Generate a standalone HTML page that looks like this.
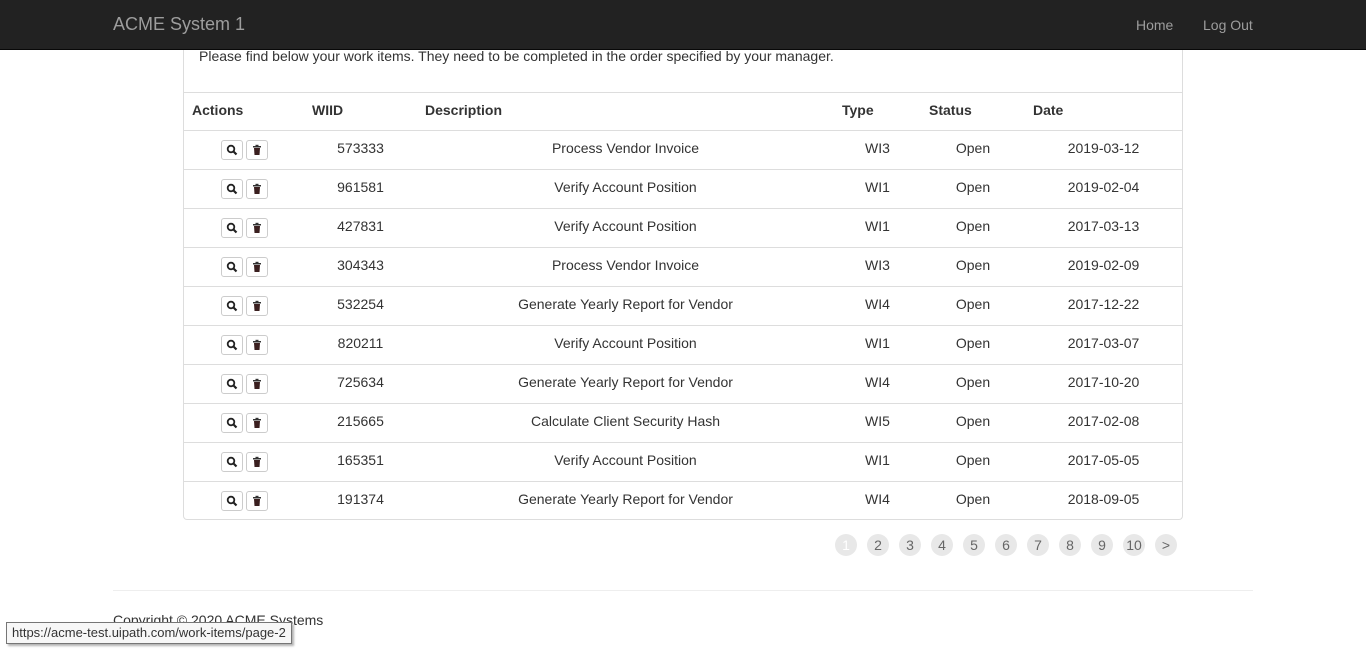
<!DOCTYPE html>
<html><head><meta charset="utf-8"><style>
*{box-sizing:border-box}
body{margin:0;width:1366px;height:650px;overflow:hidden;background:#fff;font-family:"Liberation Sans",Arial,sans-serif;font-size:14px;color:#333;position:relative}
.nav{position:absolute;left:0;top:0;width:1366px;height:50px;background:#222;border-bottom:1px solid #080808;z-index:5}
.brand{position:absolute;left:113px;top:14px;font-size:18px;color:#9d9d9d}
.nl{position:absolute;top:17px;color:#9d9d9d;font-size:14px}
.panel{position:absolute;left:183px;top:30px;width:1000px;height:490px;border:1px solid #ddd;border-top:none;border-radius:0 0 4px 4px}
.intro{position:absolute;left:199px;top:48px;font-size:14px}
table{position:absolute;left:184px;top:92px;border-collapse:collapse;width:998px;table-layout:fixed}
th{text-align:left;font-weight:bold;height:38px;padding:0 8px 4px;border-top:1px solid #ddd;border-bottom:1px solid #ddd}
td{text-align:center;height:39px;padding:0 8px 5px;border-top:1px solid #ddd}
tr:first-child td{border-top:none}
.b{display:inline-block;width:22px;height:20px;border:1px solid #ccc;border-radius:3px;vertical-align:middle;margin:0 1.5px;position:relative;top:2px;background:#fff}
.b svg{position:absolute;left:4px;top:3px}
.pg{position:absolute;top:534px;width:22px;height:22px;border-radius:11px;background:#e8e8e8;color:#666;text-align:center;line-height:22px;font-size:14px}
.hr{position:absolute;left:113px;top:590px;width:1140px;border-top:1px solid #eee}
.copy{position:absolute;left:113px;top:612px}
.tip{position:absolute;left:6px;top:622px;height:22px;padding:0 5px;border:1px solid #767676;background:#f7f7f7;font-size:13px;line-height:20px;color:#333;box-shadow:2px 2px 2px rgba(0,0,0,.3)}
</style></head><body>
<div class="nav"><span class="brand">ACME System 1</span><span class="nl" style="left:1136px">Home</span><span class="nl" style="left:1203px">Log Out</span></div>
<div class="panel"></div>
<div class="intro">Please find below your work items. They need to be completed in the order specified by your manager.</div>
<table>
<colgroup><col style="width:120px"><col style="width:113px"><col style="width:417px"><col style="width:87px"><col style="width:104px"><col style="width:157px"></colgroup>
<thead><tr><th>Actions</th><th>WIID</th><th>Description</th><th>Type</th><th>Status</th><th>Date</th></tr></thead>
<tbody id="tb"></tbody></table>
<script>
var d=[["573333","Process Vendor Invoice","WI3","2019-03-12"],["961581","Verify Account Position","WI1","2019-02-04"],["427831","Verify Account Position","WI1","2017-03-13"],["304343","Process Vendor Invoice","WI3","2019-02-09"],["532254","Generate Yearly Report for Vendor","WI4","2017-12-22"],["820211","Verify Account Position","WI1","2017-03-07"],["725634","Generate Yearly Report for Vendor","WI4","2017-10-20"],["215665","Calculate Client Security Hash","WI5","2017-02-08"],["165351","Verify Account Position","WI1","2017-05-05"],["191374","Generate Yearly Report for Vendor","WI4","2018-09-05"]];
var s='<span class="b"><svg width="12" height="12" viewBox="0 0 12 12"><circle cx="5" cy="5" r="3.3" fill="none" stroke="#222" stroke-width="1.8"/><path d="M7.4 7.4L10.5 10.5" stroke="#222" stroke-width="2.2"/></svg></span><span class="b"><svg width="12" height="12" viewBox="0 0 12 12"><rect x="2" y="2" width="8" height="1.5" fill="#333"/><rect x="4.5" y="0.8" width="3" height="1.5" fill="#333"/><path d="M3 4h6l-.5 7h-5z" fill="#3a1f1f"/></svg></span>';
var h='';d.forEach(function(r){h+='<tr><td>'+s+'</td><td>'+r[0]+'</td><td>'+r[1]+'</td><td>'+r[2]+'</td><td>Open</td><td>'+r[3]+'</td></tr>'});
document.getElementById('tb').innerHTML=h;
var p='',l=['1','2','3','4','5','6','7','8','9','10','>'];
l.forEach(function(t,i){p+='<div class="pg" style="left:'+(835+i*32)+'px;'+(i==0?'color:#fff':'')+'">'+t+'</div>'});
document.write(p);
</script>
<div class="hr"></div>
<div class="copy">Copyright © 2020 ACME Systems</div>
<div class="tip">https://acme-test.uipath.com/work-items/page-2</div>
</body></html>
